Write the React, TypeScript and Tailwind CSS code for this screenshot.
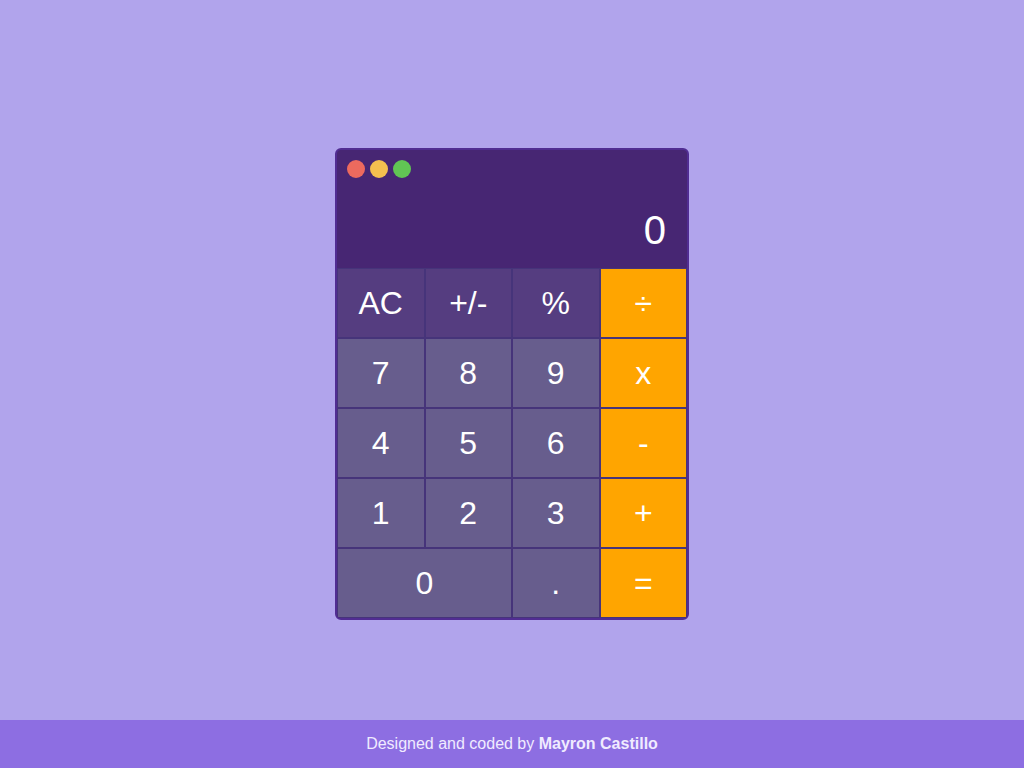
import React from "react";

const keys: { label: string; kind: "fn" | "num" | "op"; wide?: boolean }[] = [
  { label: "AC", kind: "fn" },
  { label: "+/-", kind: "fn" },
  { label: "%", kind: "fn" },
  { label: "÷", kind: "op" },
  { label: "7", kind: "num" },
  { label: "8", kind: "num" },
  { label: "9", kind: "num" },
  { label: "x", kind: "op" },
  { label: "4", kind: "num" },
  { label: "5", kind: "num" },
  { label: "6", kind: "num" },
  { label: "-", kind: "op" },
  { label: "1", kind: "num" },
  { label: "2", kind: "num" },
  { label: "3", kind: "num" },
  { label: "+", kind: "op" },
  { label: "0", kind: "num", wide: true },
  { label: ".", kind: "num" },
  { label: "=", kind: "op" },
];

const kindClass = {
  fn: "bg-[#553d80]",
  num: "bg-[#675d8d]",
  op: "bg-[#ffa500]",
};

export default function App() {
  return (
    <div className="flex flex-col h-screen bg-[#b1a4ec] font-['Liberation_Sans',Arial,sans-serif]">
      <main className="flex-1 flex items-center justify-center pt-12">
        <div className="w-[354px] border-2 border-[#512d92] rounded-md overflow-hidden bg-[#472673]">
          <div className="h-[118px] flex flex-col justify-between pt-[10px] pl-[10px] pr-[21px] pb-[18px]">
            <div className="flex gap-[5px]">
              <span className="w-[18px] h-[18px] rounded-full bg-[#ed6a5e]" />
              <span className="w-[18px] h-[18px] rounded-full bg-[#f5bf4f]" />
              <span className="w-[18px] h-[18px] rounded-full bg-[#61c554]" />
            </div>
            <div className="text-right text-white text-[40px] leading-none">0</div>
          </div>
          <div className="grid grid-cols-4 gap-[2px] p-[1px] bg-[#46347a]">
            {keys.map((k) => (
              <button
                key={k.label}
                className={`h-[68px] flex items-center justify-center text-white text-[32px] ${kindClass[k.kind]} ${k.wide ? "col-span-2" : ""}`}
              >
                {k.label}
              </button>
            ))}
          </div>
        </div>
      </main>
      <footer className="h-12 flex items-center justify-center bg-[#8d6ee2] text-[#f0ebff] text-base">
        <span>
          Designed and coded by <b className="font-bold">Mayron Castillo</b>
        </span>
      </footer>
    </div>
  );
}
